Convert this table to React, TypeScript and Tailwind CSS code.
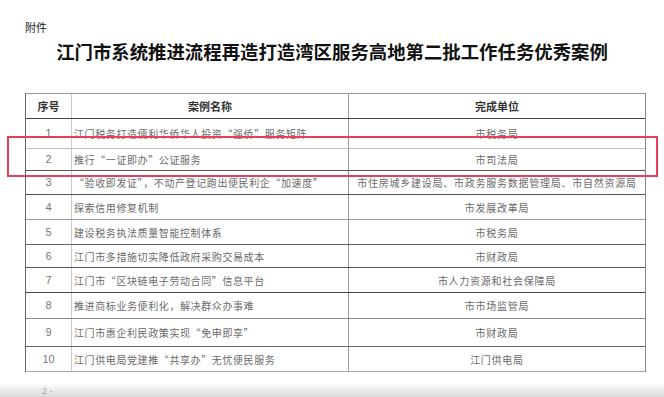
const rows = [
  { no: "1", name: "江门税务打造便利华侨华人投资“强侨”服务矩阵", unit: "市税务局", h: "h-[30px]", line: "border-[#bdbdbd]" },
  { no: "2", name: "推行“一证即办”公证服务", unit: "市司法局", h: "h-[22px]", line: "border-[#555]" },
  { no: "3", name: "“验收即发证”，不动产登记跑出便民利企“加速度”", unit: "市住房城乡建设局、市政务服务数据管理局、市自然资源局", h: "h-[24px]", line: "border-[#555]" },
  { no: "4", name: "探索信用修复机制", unit: "市发展改革局", h: "h-[25px]", line: "border-[#999]" },
  { no: "5", name: "建设税务执法质量智能控制体系", unit: "市税务局", h: "h-[25px]", line: "border-[#666]" },
  { no: "6", name: "江门市多措施切实降低政府采购交易成本", unit: "市财政局", h: "h-[23px]", line: "border-[#555]" },
  { no: "7", name: "江门市“区块链电子劳动合同”信息平台", unit: "市人力资源和社会保障局", h: "h-[25px]", line: "border-[#444]" },
  { no: "8", name: "推进商标业务便利化，解决群众办事难", unit: "市市场监管局", h: "h-[26px]", line: "border-[#888]" },
  { no: "9", name: "江门市惠企利民政策实现“免申即享”", unit: "市财政局", h: "h-[28px]", line: "border-[#666]" },
  { no: "10", name: "江门供电局党建推“共享办”无忧便民服务", unit: "江门供电局", h: "h-[25px]", line: "border-[#aaa]" },
];

export default function App() {
  return (
    <div className="relative w-[664px] h-[397px] overflow-hidden bg-white font-['Noto_Sans_CJK_SC',sans-serif]">
      {/* 附件 */}
      <div className="pt-[20px] pl-[25px] text-[11px] leading-[14px] text-[#222]">附件</div>

      {/* 标题 */}
      <h1 className="mt-[5px] text-center text-[18.4px] leading-[24px] font-bold text-[#111]">
        江门市系统推进流程再造打造湾区服务高地第二批工作任务优秀案例
      </h1>

      {/* 表格 */}
      <div className="mt-[30px] ml-[25px] w-[621px] border-t border-l border-r border-t-[#999] border-l-[#666] border-r-[#888]">
        <div className="grid grid-cols-[46px_277px_296px] h-[25px] border-b border-[#444] text-[11px] font-bold text-[#333]">
          <div className="flex items-center justify-center border-r border-[#ccc]">序号</div>
          <div className="flex items-center justify-center border-r border-[#999]">案例名称</div>
          <div className="flex items-center justify-center">完成单位</div>
        </div>
        {rows.map((r) => (
          <div key={r.no} className={`grid grid-cols-[46px_277px_296px] border-b ${r.h} ${r.line}`}>
            <div className="flex items-center justify-center border-r border-[#ccc] font-['Liberation_Sans',sans-serif] text-[11px] text-[#777]">
              {r.no}
            </div>
            <div className="flex items-center border-r border-[#999] pl-[2px] text-[10px] tracking-[0.6px] text-[#6a6a6a] whitespace-nowrap">
              {r.name}
            </div>
            <div className="flex items-center justify-center text-[10px] tracking-[0.75px] text-[#6a6a6a] whitespace-nowrap">
              {r.unit}
            </div>
          </div>
        ))}
      </div>

      {/* 红框标注 */}
      <div className="absolute left-[7px] top-[136px] w-[651px] h-[41px] border-2 border-[#e8405a]" />

      {/* 下一页 */}
      <div className="absolute bottom-0 left-0 w-full h-[14px] bg-gradient-to-b from-white to-[#d9d9d9]" />
      <div className="absolute left-[42px] top-[386px] font-['Liberation_Sans',sans-serif] text-[9px] leading-[10px] text-[#aaa]">2 -</div>
    </div>
  );
}
